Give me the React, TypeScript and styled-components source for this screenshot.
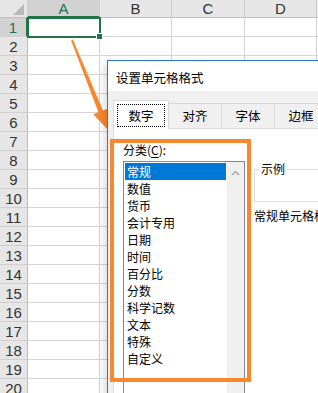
import React from "react";
import styled, { createGlobalStyle } from "styled-components";

const COLS = ["A", "B", "C", "D", "E"];
const ROWS = Array.from({ length: 20 }, (_, i) => i + 1);
const CATEGORIES = [
  "常规",
  "数值",
  "货币",
  "会计专用",
  "日期",
  "时间",
  "百分比",
  "分数",
  "科学记数",
  "文本",
  "特殊",
  "自定义",
];
const TABS = ["数字", "对齐", "字体", "边框", "填充"];

function App() {
  return (
    <Screen>
      <GlobalStyle />
      <Sheet>
        <Corner>
          <CornerMark />
        </Corner>
        {COLS.map((c) => (
          <ColHeader key={c} $active={c === "A"}>
            {c}
          </ColHeader>
        ))}
        {ROWS.map((r) => (
          <React.Fragment key={r}>
            <RowHeader $active={r === 1}>{r}</RowHeader>
            {COLS.map((c) => (
              <Cell key={c}>
                {r === 1 && c === "A" && (
                  <Selection>
                    <FillHandle />
                  </Selection>
                )}
              </Cell>
            ))}
          </React.Fragment>
        ))}
      </Sheet>

      <Arrow viewBox="0 0 318 393" width="318" height="393">
        <polygon
          points="72.9,39.6 103,110.5 108.1,108.5 108,130 93.3,114.3 98.4,112.3 71.1,40.4"
          fill="#f8872e"
        />
      </Arrow>

      <Dialog>
        <TitleBar>设置单元格格式</TitleBar>
        <DialogBody>
          <TabStrip>
            {TABS.map((t, i) => (
              <Tab key={t} $selected={i === 0}>
                {i === 0 ? <FocusRing>{t}</FocusRing> : t}
              </Tab>
            ))}
          </TabStrip>
          <TabPage>
            <LeftColumn>
              <FieldLabel>
                分类(<u>C</u>):
              </FieldLabel>
              <ListBox>
                <ListItems>
                  {CATEGORIES.map((c, i) => (
                    <ListItem key={c} $selected={i === 0}>
                      {c}
                    </ListItem>
                  ))}
                </ListItems>
                <ScrollBar>
                  <svg width="9" height="6" viewBox="0 0 9 6">
                    <polyline
                      points="1,5 4.5,1.5 8,5"
                      fill="none"
                      stroke="#a3a3a3"
                      strokeWidth="1.4"
                    />
                  </svg>
                </ScrollBar>
              </ListBox>
            </LeftColumn>
            <RightColumn>
              <SampleBox>
                <legend>示例</legend>
              </SampleBox>
              <Description>常规单元格格式不包含任何特定的数字格式。</Description>
            </RightColumn>
          </TabPage>
        </DialogBody>
      </Dialog>

      <Highlight />
    </Screen>
  );
}

const GlobalStyle = createGlobalStyle`
  html, body {
    margin: 0;
    padding: 0;
    background: #ffffff;
  }
  body {
    font-family: "Liberation Sans", "Noto Sans CJK SC", sans-serif;
  }
`;

const Screen = styled.div`
  position: relative;
  width: 318px;
  height: 393px;
  overflow: hidden;
  background: #ffffff;
`;

const Sheet = styled.div`
  display: grid;
  grid-template-columns: 28px 72px 72px 73px 72px 72px;
  grid-template-rows: 18px repeat(20, 19px);
`;

const HeaderBase = styled.div`
  box-sizing: border-box;
  background: #e6e6e6;
  border-right: 1px solid #cfcfcf;
  border-bottom: 1px solid #bdbdbd;
  display: flex;
  align-items: center;
  justify-content: center;
  font-family: "Liberation Sans", sans-serif;
  font-size: 15px;
  color: #333333;
`;

const Corner = styled(HeaderBase)`
  position: relative;
`;

const CornerMark = styled.div`
  position: absolute;
  right: 3px;
  bottom: 2px;
  width: 0;
  height: 0;
  border-left: 11px solid transparent;
  border-bottom: 11px solid #b9b9b9;
`;

const ColHeader = styled(HeaderBase)<{ $active?: boolean }>`
  background: ${(p) => (p.$active ? "#d2d2d2" : "#e6e6e6")};
  color: ${(p) => (p.$active ? "#217346" : "#333333")};
  border-bottom: ${(p) => (p.$active ? "2px solid #217346" : "1px solid #bdbdbd")};
`;

const RowHeader = styled(HeaderBase)<{ $active?: boolean }>`
  background: ${(p) => (p.$active ? "#d2d2d2" : "#e6e6e6")};
  color: ${(p) => (p.$active ? "#217346" : "#333333")};
  border-right: ${(p) => (p.$active ? "2px solid #217346" : "1px solid #bdbdbd")};
  border-bottom: 1px solid #cfcfcf;
`;

const Cell = styled.div`
  position: relative;
  box-sizing: border-box;
  border-right: 1px solid #d4d4d4;
  border-bottom: 1px solid #d4d4d4;
`;

const Selection = styled.div`
  position: absolute;
  left: -1px;
  top: -1px;
  width: 74px;
  height: 21px;
  box-sizing: border-box;
  border: 2px solid #217346;
  z-index: 2;
`;

const FillHandle = styled.div`
  position: absolute;
  right: -4px;
  bottom: -4px;
  width: 5px;
  height: 5px;
  background: #217346;
  border: 1px solid #ffffff;
`;

const Arrow = styled.svg`
  position: absolute;
  left: 0;
  top: 0;
  pointer-events: none;
  z-index: 3;
`;

const Dialog = styled.div`
  position: absolute;
  left: 107px;
  top: 60px;
  width: 262px;
  height: 360px;
  z-index: 4;
  display: flex;
  flex-direction: column;
  border: 1px solid #2b78c5;
  background: #f0f0f0;
  box-shadow: -2px 3px 8px rgba(0, 0, 0, 0.16);
  font-family: "Noto Sans CJK SC", "Liberation Sans", sans-serif;
  font-size: 12px;
  color: #000000;
`;

const TitleBar = styled.div`
  height: 30px;
  box-sizing: border-box;
  padding: 3px 0 0 8px;
  display: flex;
  align-items: center;
  background: #ffffff;
  font-size: 12.5px;
`;

const DialogBody = styled.div`
  flex: 1;
  display: flex;
  flex-direction: column;
  padding: 9px 0 0 5px;
`;

const TabStrip = styled.div`
  display: flex;
  align-items: flex-end;
  height: 28px;
`;

const Tab = styled.div<{ $selected?: boolean }>`
  position: relative;
  z-index: ${(p) => (p.$selected ? 1 : 0)};
  flex-shrink: 0;
  box-sizing: border-box;
  width: ${(p) => (p.$selected ? "56px" : "54px")};
  height: ${(p) => (p.$selected ? "29px" : "25px")};
  margin-bottom: ${(p) => (p.$selected ? "-1px" : "0")};
  margin-left: ${(p) => (p.$selected ? "0" : "-1px")};
  display: flex;
  align-items: center;
  justify-content: center;
  padding: ${(p) => (p.$selected ? "3px 3px 2px" : "0 0 1px")};
  border: 1px solid #d9d9d9;
  border-bottom: none;
  background: ${(p) => (p.$selected ? "#ffffff" : "#f0f0f0")};
  font-size: 12.5px;
`;

const FocusRing = styled.span`
  flex: 1;
  align-self: stretch;
  display: flex;
  align-items: center;
  justify-content: center;
  border: 1px dotted #000000;
`;

const TabPage = styled.div`
  flex: 1;
  display: flex;
  box-sizing: border-box;
  border: 1px solid #d9d9d9;
  background: #ffffff;
`;

const LeftColumn = styled.div`
  display: flex;
  flex-direction: column;
  padding: 13px 0 0 9px;
`;

const FieldLabel = styled.div`
  height: 16px;
  line-height: 16px;
  margin-bottom: 3px;

  & u {
    text-decoration-thickness: 1px;
    text-underline-offset: 2px;
  }
`;

const ListBox = styled.div`
  display: flex;
  width: 122px;
  height: 250px;
  box-sizing: border-box;
  border: 1px solid #828790;
  background: #ffffff;
`;

const ListItems = styled.div`
  flex: 1;
  padding: 1px;
`;

const ListItem = styled.div<{ $selected?: boolean }>`
  height: 17px;
  line-height: 17px;
  padding-left: 2px;
  white-space: nowrap;
  background: ${(p) => (p.$selected ? "#0078d7" : "transparent")};
  color: ${(p) => (p.$selected ? "#ffffff" : "#000000")};
`;

const ScrollBar = styled.div`
  width: 17px;
  display: flex;
  justify-content: center;
  padding-top: 8px;
  box-sizing: border-box;
  background: #f0f0f0;
`;

const RightColumn = styled.div`
  flex: 1;
  display: flex;
  flex-direction: column;
  padding: 32px 0 0 9px;
  min-width: 0;
`;

const SampleBox = styled.fieldset`
  margin: 0;
  padding: 0;
  height: 41px;
  box-sizing: border-box;
  border: 1px solid #dcdcdc;

  & legend {
    margin-left: 4px;
    padding: 0 2px;
    line-height: 16px;
    font-size: 12px;
  }
`;

const Description = styled.div`
  margin-top: 6px;
  line-height: 16px;
  white-space: nowrap;
`;

const Highlight = styled.div`
  position: absolute;
  left: 110px;
  top: 139px;
  width: 141px;
  height: 243px;
  box-sizing: border-box;
  border: 4px solid #f8872e;
  z-index: 5;
  pointer-events: none;
`;

export default App;
